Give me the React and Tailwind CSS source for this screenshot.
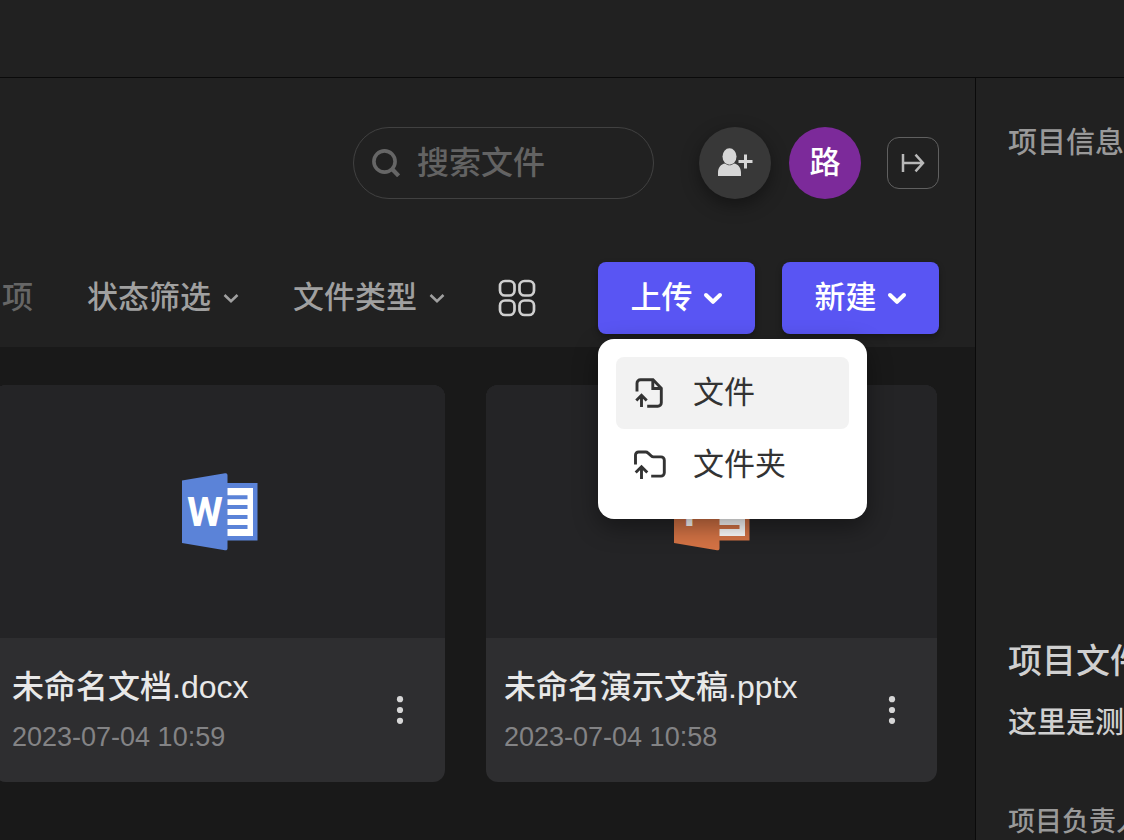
import React, { useState } from 'react';

const files = [
  { id: 1, name: '未命名文档.docx', time: '2023-07-04 10:59', type: 'word' },
  { id: 2, name: '未命名演示文稿.pptx', time: '2023-07-04 10:58', type: 'ppt' },
];

const SearchIcon = () => (
  <svg className="w-7 h-7 shrink-0" viewBox="0 0 28 28" fill="none" stroke="currentColor" strokeWidth="3.6">
    <circle cx="12.5" cy="12.5" r="10.6" />
    <path d="M19.8 19.8 26.6 26.8" strokeWidth="4.2" />
  </svg>
);

const AddUserIcon = () => (
  <svg className="w-9 h-8" viewBox="0 0 36 32" fill="currentColor">
    <ellipse cx="12.5" cy="9.5" rx="7" ry="8.2" />
    <path d="M1 29v-3.200c0-5 2.800-8.800 7.200-9.300 1.300 1.200 2.700 1.800 4.300 1.800s3-.6 4.300-1.800c4.400.5 7.200 4.300 7.200 9.300v3.200z" />
    <path d="M28.500 7.500v14M21.500 14.500h14" stroke="currentColor" strokeWidth="3" />
  </svg>
);

const CollapseIcon = () => (
  <svg className="w-6 h-5" viewBox="0 0 24 20" fill="none" stroke="currentColor" strokeWidth="2.500">
    <path d="M2 1v18M2 10h20M14.500 1.600 22 10l-7.500 8.400" />
  </svg>
);

const ChevronSmall = () => (
  <svg className="w-4 h-4" viewBox="0 0 16 16" fill="none" stroke="currentColor" strokeWidth="2.600">
    <path d="m1.500 5 6.500 6.200L14.500 5" />
  </svg>
);

const ChevronBold = () => (
  <svg className="w-5 h-5" viewBox="0 0 20 20" fill="none" stroke="currentColor" strokeWidth="4" strokeLinecap="round" strokeLinejoin="round">
    <path d="m3 7 7 6.800L17 7" />
  </svg>
);

const GridIcon = () => (
  <svg className="w-[38px] h-[38px]" viewBox="0 0 38 38" fill="none" stroke="currentColor" strokeWidth="2.700">
    <rect x="2" y="2" width="14.500" height="14.500" rx="5" />
    <rect x="21.500" y="2" width="14.500" height="14.500" rx="5" />
    <rect x="2" y="21.500" width="14.500" height="14.500" rx="5" />
    <rect x="21.500" y="21.500" width="14.500" height="14.500" rx="5" />
  </svg>
);

const UploadFileIcon = () => (
  <svg className="w-8 h-8" viewBox="0 0 32 32" fill="none" stroke="currentColor" strokeWidth="2.900">
    <path d="M3 14.500V6.300a3.500 3.500 0 0 1 3.500-3.500H19l8.300 8.500v14.400a3.500 3.500 0 0 1-3.500 3.500H13.200" />
    <path d="M18.800 3v8.500h8.500" />
    <path d="M7.500 30V19M2.300 23.500l5.200-5.200 5.200 5.200" />
  </svg>
);

const UploadFolderIcon = () => (
  <svg className="w-8 h-8" viewBox="0 0 32 32" fill="none" stroke="currentColor" strokeWidth="2.900">
    <path d="M1.500 15.500V6a3 3 0 0 1 3-3h7.300a3 3 0 0 1 2.100.9L17.300 7a3 3 0 0 0 2.100.9H27a3.300 3.300 0 0 1 3.300 3.300v12.600a3.300 3.300 0 0 1-3.300 3.300h-9.800" />
    <path d="M7.500 30V18.500M1.700 23.500l5.800-5.800 5.800 5.800" />
  </svg>
);

const FileLogo = ({ type }) => {
  const color = type === 'word' ? '#5b83d8' : '#d47345';
  return (
    <svg className="w-[76px] h-[78px]" viewBox="0 0 76 78">
      <rect x="40" y="10" width="35.500" height="57.500" fill={color} />
      <rect x="45" y="15" width="26" height="48" fill="#fff" />
      <path d="M45 24.200h20.500M45 34.100h20.500M45 44h20.500M45 53.900h20.500" stroke={color} strokeWidth="4" />
      <path d="M0 7.500 43 .3c1.600-.3 2.500.4 2.500 2v73c0 1.600-.9 2.200-2.500 2L0 70z" fill={color} />
      <text
        x="23"
        y="53"
        textAnchor="middle"
        fill="#fff"
        fontSize="41"
        fontWeight="700"
        fontFamily="Roboto, 'Liberation Sans', sans-serif"
      >
        {type === 'word' ? 'W' : 'P'}
      </text>
    </svg>
  );
};

const MoreIcon = () => (
  <svg className="w-2 h-7" viewBox="0 0 8 28" fill="currentColor">
    <circle cx="4" cy="3.200" r="3.100" />
    <circle cx="4" cy="14" r="3.100" />
    <circle cx="4" cy="24.800" r="3.100" />
  </svg>
);

const FileCard = ({ file }) => (
  <article className="rounded-xl overflow-hidden bg-[#2e2e30]">
    <div className="h-[253px] flex items-center justify-center bg-[#242426]">
      <FileLogo type={file.type} />
    </div>
    <div className="flex items-center justify-between pl-[18px] pr-[37px] py-[22px]">
      <div className="whitespace-nowrap">
        <h3 className="text-[32px] leading-[54px] font-medium text-[#e8e8e8]">{file.name}</h3>
        <p className="text-[27px] leading-[46px] text-[#838385]">{file.time}</p>
      </div>
      <button aria-label="更多" className="px-1 text-[#d6d6d6]">
        <MoreIcon />
      </button>
    </div>
  </article>
);

const App = () => {
  const [menuOpen, setMenuOpen] = useState(true);

  return (
    <div className="min-h-screen flex flex-col overflow-hidden bg-[#212121] font-['Liberation_Sans','Noto_Sans_CJK_SC',sans-serif]">
      <header className="h-[78px] shrink-0 border-b border-[#0a0a0a]" />

      <div className="flex flex-1">
        <main className="flex-1 min-w-0 flex flex-col bg-[#191919]">
          <div className="bg-[#212121] pt-[49px] pb-[13px] pr-9">
            <div className="flex items-center justify-end">
              <label className="flex items-center gap-[17px] w-[301px] h-[72px] pl-[18px] pr-6 mr-[45px] rounded-full border border-[#414141] text-[#666666]">
                <SearchIcon />
                <input
                  type="text"
                  placeholder="搜索文件"
                  aria-label="搜索文件"
                  className="w-full min-w-0 bg-transparent outline-none text-[32px] leading-[48px] font-medium placeholder:text-[#636363]"
                />
              </label>
              <button aria-label="添加成员" className="w-[72px] h-[72px] mr-[18px] flex items-center justify-center rounded-full bg-[#383838] text-[#d6d6d6] shadow-[0_6px_18px_rgba(0,0,0,0.4)]">
                <AddUserIcon />
              </button>
              <button className="w-[72px] h-[72px] mr-[26px] rounded-full bg-[#7c2a9a] text-white text-[31px] font-medium">
                路
              </button>
              <button aria-label="收起" className="w-[52px] h-[52px] flex items-center justify-center rounded-xl border border-[#606060] text-[#b8b8b8]">
                <CollapseIcon />
              </button>
            </div>

            <div className="flex items-center justify-end mt-[63px] whitespace-nowrap text-[31px] leading-[48px] font-medium text-[#a0a0a0]">
              <span className="mr-[54px] text-[#666666]">项</span>
              <button className="flex items-center gap-3 mr-[54px]">
                状态筛选
                <ChevronSmall />
              </button>
              <button className="flex items-center gap-3 mr-[53px]">
                文件类型
                <ChevronSmall />
              </button>
              <button aria-label="网格视图" className="mr-[62px] text-[#cfcfcf]">
                <GridIcon />
              </button>

              <div className="relative mr-[27px]">
                <button
                  onClick={() => setMenuOpen(!menuOpen)}
                  className="w-[157px] h-[72px] flex items-center justify-center gap-2.5 rounded-lg bg-[#5955f3] text-white shadow-[0_3px_6px_rgba(0,0,0,0.3)]"
                >
                  上传
                  <ChevronBold />
                </button>
                {menuOpen && (
                  <div className="absolute z-10 left-0 top-full mt-[5px] w-[269px] p-[18px] rounded-2xl bg-white shadow-[0_8px_24px_rgba(0,0,0,0.4)] font-normal text-[#333333]">
                    <button className="w-full h-[72px] flex items-center gap-[27px] px-[18px] rounded-lg bg-[#f2f2f2]">
                      <UploadFileIcon />
                      文件
                    </button>
                    <button className="w-full h-[72px] flex items-center gap-[27px] px-[18px] rounded-lg">
                      <UploadFolderIcon />
                      文件夹
                    </button>
                  </div>
                )}
              </div>
              <button className="w-[157px] h-[72px] flex items-center justify-center gap-2.5 rounded-lg bg-[#5955f3] text-white shadow-[0_3px_6px_rgba(0,0,0,0.3)]">
                新建
                <ChevronBold />
              </button>
            </div>
          </div>

          <div className="grid grid-cols-2 gap-[41px] -ml-1.5 pt-[38px] pr-[38px] pb-9">
            {files.map((file) => (
              <FileCard key={file.id} file={file} />
            ))}
          </div>
        </main>

        <aside className="w-[149px] shrink-0 border-l border-[#0a0a0a] pl-8 pt-[41px] overflow-hidden whitespace-nowrap font-medium">
          <h2 className="text-[29px] leading-[48px] text-[#999999]">项目信息</h2>
          <h3 className="mt-[470px] text-[34px] leading-[48px] text-[#d0d0d0]">项目文件</h3>
          <p className="mt-3.5 text-[29px] leading-[48px] text-[#d0d0d0]">这里是测</p>
          <p className="mt-14 text-[27px] leading-[38px] text-[#999999]">项目负责人</p>
        </aside>
      </div>
    </div>
  );
};

export default App;
